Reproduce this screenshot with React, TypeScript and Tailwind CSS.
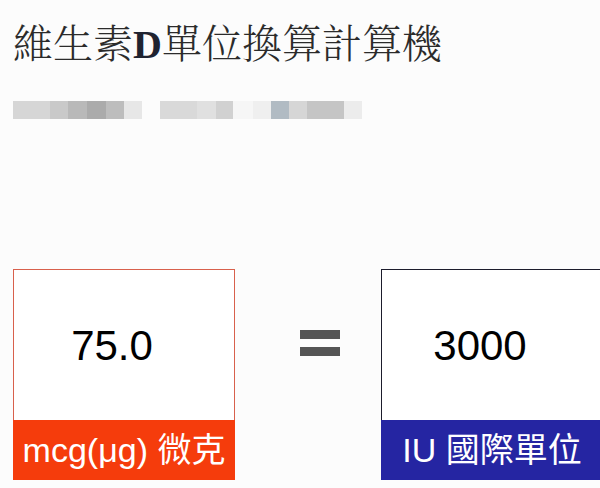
import React from "react";

const blur1 = [
  { w: 37, c: "#d6d6d6" },
  { w: 18, c: "#c9c9c9" },
  { w: 19, c: "#b9b9b9" },
  { w: 19, c: "#ababab" },
  { w: 18, c: "#bdbdbd" },
  { w: 18, c: "#e7e7e7" },
];
const blur2 = [
  { w: 37, c: "#d9d9d9" },
  { w: 19, c: "#e0e0e0" },
  { w: 17, c: "#d1d1d1" },
  { w: 20, c: "#f6f6f6" },
  { w: 18, c: "#efefef" },
  { w: 18, c: "#b1bbc3" },
  { w: 18, c: "#d6d6d6" },
  { w: 37, c: "#c5c5c5" },
  { w: 18, c: "#ececec" },
];

function Box({
  value,
  label,
  border,
  band,
}: {
  value: string;
  label: string;
  border: string;
  band: string;
}) {
  return (
    <div className={`w-[222px] shrink-0 flex flex-col border bg-white ${border}`}>
      <div className="h-[150px] flex items-center justify-center pr-6 text-[42px] text-black font-['Liberation_Sans',Arial,sans-serif]">
        {value}
      </div>
      <div
        className={`h-[60px] -mx-px -mb-px flex items-center justify-center text-[34px] text-white whitespace-nowrap font-['Liberation_Sans','Noto_Sans_CJK_TC',sans-serif] ${band}`}
      >
        {label}
      </div>
    </div>
  );
}

export default function App() {
  return (
    <div className="w-[600px] h-[488px] overflow-hidden bg-[#fcfcfc] pl-[13px]">
      <h1 className="pt-[17px] text-[40px] leading-[48px] text-[#2b2b2b] font-light whitespace-nowrap font-['Noto_Serif_CJK_TC','Noto_Sans_CJK_TC',serif]">
        維生素
        <span className="font-bold text-[#1f2330] font-['Liberation_Serif',serif]">D</span>
        單位換算計算機
      </h1>
      <div className="mt-[32px] flex h-[18px]">
        {blur1.map((b, i) => (
          <div key={i} style={{ width: b.w, background: b.c }} />
        ))}
        <div className="w-[18px]" />
        {blur2.map((b, i) => (
          <div key={i} style={{ width: b.w, background: b.c }} />
        ))}
      </div>
      <div className="mt-[150px] flex items-start">
        <Box value="75.0" label="mcg(μg) 微克" border="border-[#d8604c]" band="bg-[#f53c0c]" />
        <div className="ml-[65px] w-[40px] shrink-0 flex flex-col gap-[8px] pt-[61px]">
          <div className="h-[9px] bg-[#555555]" />
          <div className="h-[9px] bg-[#555555]" />
        </div>
        <div className="ml-[41px]">
          <Box value="3000" label="IU 國際單位" border="border-[#1c1c2c]" band="bg-[#2525a2]" />
        </div>
      </div>
    </div>
  );
}
